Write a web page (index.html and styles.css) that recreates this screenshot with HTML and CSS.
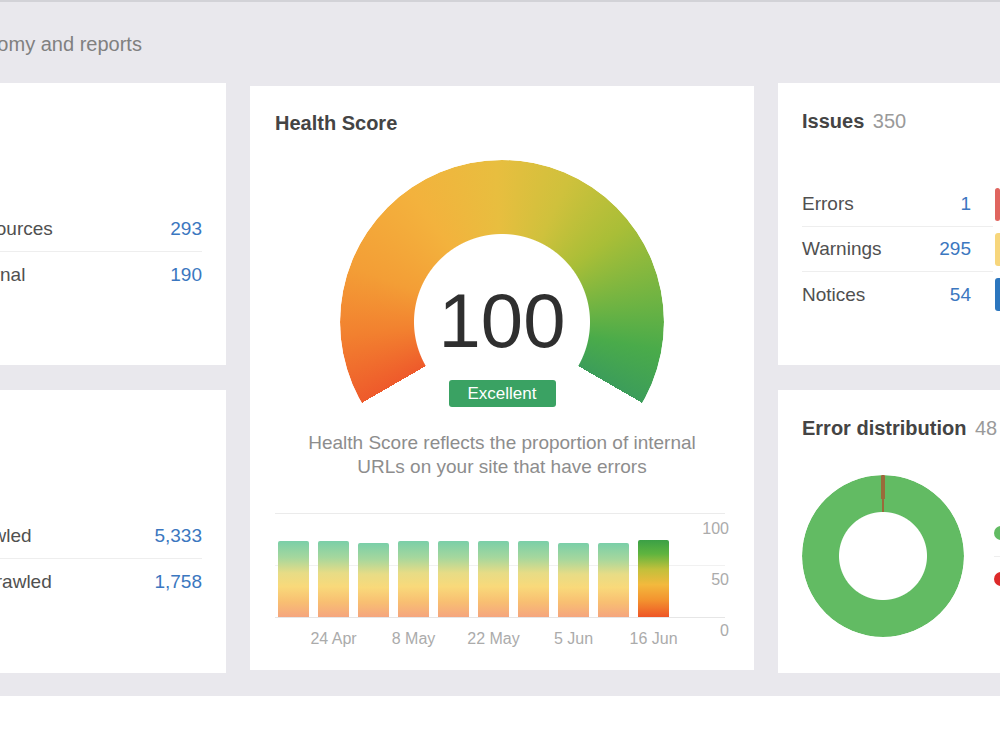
FILE: index.html
```html
<!DOCTYPE html>
<html>

<head>
    <link rel="stylesheet" href="styles.css">
</head>

<body>
    <div class="page">
        <div class="board">
            <div class="page-title">Taxonomy and reports</div>
            <div class="grid">
                <div class="card wide-left">
                    <div class="rows">
                        <div class="row"><span class="label">Resources</span><span class="num">293</span></div>
                        <div class="row"><span class="label">Internal</span><span class="num">190</span></div>
                    </div>
                </div>

                <div class="card health">
                    <div class="card-title">Health Score</div>
                    <div class="gauge">
                        <div class="gauge-value">100</div>
                        <div class="gauge-badge">Excellent</div>
                    </div>
                    <div class="health-text">Health Score reflects the proportion of internal<br>URLs on your site that have errors</div>
                    <div class="chart">
                        <div class="plot">
                            <div class="bars">
                                <div class="bar" style="height:76px"></div>
                                <div class="bar" style="height:76px"></div>
                                <div class="bar" style="height:74px"></div>
                                <div class="bar" style="height:76px"></div>
                                <div class="bar" style="height:76px"></div>
                                <div class="bar" style="height:76px"></div>
                                <div class="bar" style="height:76px"></div>
                                <div class="bar" style="height:74px"></div>
                                <div class="bar" style="height:74px"></div>
                                <div class="bar bar-now" style="height:77px"></div>
                            </div>
                            <div class="y-axis">
                                <span>100</span>
                                <span>50</span>
                                <span>0</span>
                            </div>
                        </div>
                        <div class="x-axis">
                            <span></span><span>24 Apr</span>
                            <span></span><span>8 May</span>
                            <span></span><span>22 May</span>
                            <span></span><span>5 Jun</span>
                            <span></span><span>16 Jun</span>
                        </div>
                    </div>
                </div>

                <div class="card side">
                    <div class="card-title">Issues <span class="title-count">350</span></div>
                    <div class="issues">
                        <div class="issue">
                            <div class="issue-info"><span class="label">Errors</span><span class="num">1</span></div>
                            <div class="issue-track"><div class="issue-bar errors"></div></div>
                        </div>
                        <div class="issue">
                            <div class="issue-info"><span class="label">Warnings</span><span class="num">295</span></div>
                            <div class="issue-track"><div class="issue-bar warnings"></div></div>
                        </div>
                        <div class="issue">
                            <div class="issue-info"><span class="label">Notices</span><span class="num">54</span></div>
                            <div class="issue-track"><div class="issue-bar notices"></div></div>
                        </div>
                    </div>
                </div>

                <div class="card wide-left">
                    <div class="rows">
                        <div class="row"><span class="label">Crawled</span><span class="num">5,333</span></div>
                        <div class="row"><span class="label">Uncrawled</span><span class="num">1,758</span></div>
                    </div>
                </div>

                <div class="card side">
                    <div class="card-title">Error distribution <span class="title-count">48</span></div>
                    <div class="dist">
                        <div class="donut"></div>
                        <div class="legend">
                            <div class="legend-row"><span class="dot ok"></span>No errors</div>
                            <div class="legend-row"><span class="dot bad"></span>With errors</div>
                        </div>
                    </div>
                </div>
            </div>
        </div>
    </div>
</body>

</html>
```

FILE: styles.css
```css
body {
    margin: 0;
    background: #fff;
    font-family: "Liberation Sans", Arial, sans-serif;
    overflow: hidden;
}

.page {
    background: #e9e8ed;
    border-top: 2px solid #d2d2d7;
    padding-bottom: 23px;
    overflow: hidden;
}

/* the board is wider than the window, its left edge is cut off */
.board {
    width: 1116px;
    margin-left: -56px;
}

.page-title {
    height: 81px;
    box-sizing: border-box;
    padding-top: 31px;
    font-size: 20px;
    line-height: 23px;
    color: #808080;
}

.grid {
    display: grid;
    grid-template-columns: 282px 504px 282px;
    grid-template-rows: 282px 283px;
    gap: 25px 24px;
}

.card {
    background: #fff;
    padding: 0 24px;
}

.wide-left {
    padding-left: 18px;
}

.card-title {
    font-size: 20px;
    font-weight: bold;
    line-height: 24px;
    color: #444;
}

.title-count {
    font-weight: normal;
    color: #9a9a9a;
    margin-left: 3px;
}

.rows {
    padding-top: 123px;
}

.row {
    display: flex;
    justify-content: space-between;
    align-items: center;
    height: 45px;
    font-size: 19px;
    color: #505050;
    white-space: nowrap;
}

.row:first-child {
    border-bottom: 1px solid #eeeeee;
}

.num {
    color: #3b77c0;
}

/* health score */
.health {
    grid-column: 2;
    grid-row: 1 / 3;
    margin: 3px 0;
    padding: 25px 25px 0;
}

.gauge {
    position: relative;
    width: 324px;
    height: 247px;
    margin: 25px auto 0;
    display: flex;
    flex-direction: column;
    align-items: center;
}

.gauge::before {
    content: "";
    position: absolute;
    top: 0;
    left: 0;
    width: 324px;
    height: 324px;
    border-radius: 50%;
    background: conic-gradient(from 240deg,
        #ee5a2b 0deg, #f2802f 25deg, #f39e36 50deg, #f3b23d 85deg,
        #e8be3f 118deg, #cfc13c 145deg, #a9be37 172deg, #6cb343 203deg,
        #4aab4a 220deg, #3c9d5a 240deg, transparent 240deg);
    -webkit-mask: radial-gradient(circle, transparent 87.5px, #000 88.5px);
    mask: radial-gradient(circle, transparent 87.5px, #000 88.5px);
}

.gauge-value {
    position: relative;
    margin-top: 123px;
    font-size: 76px;
    line-height: 76px;
    color: #2f2f2f;
}

.gauge-badge {
    position: relative;
    margin-top: 21px;
    width: 107px;
    height: 27px;
    border-radius: 3px;
    background: #3aa263;
    color: #fff;
    font-size: 17px;
    line-height: 27px;
    text-align: center;
}

.health-text {
    margin-top: 24px;
    font-size: 19px;
    line-height: 24px;
    color: #8d8d8d;
    text-align: center;
    white-space: nowrap;
}

.chart {
    margin-top: 34px;
    width: 454px;
}

.plot {
    display: flex;
    height: 103px;
    margin-right: 4px;
    border-top: 1px solid #ebebeb;
    border-bottom: 1px solid #e6e6e6;
    background: linear-gradient(#f1f1f1, #f1f1f1) 0 51px / 100% 1px no-repeat;
}

.bars {
    display: flex;
    align-items: flex-end;
    gap: 9px;
    padding-left: 3px;
}

.bar {
    width: 31px;
    border-radius: 2px 2px 0 0;
    background: linear-gradient(#7acfa8 0%, #a6d79d 22%, #e7dc86 42%, #f9d97a 60%, #f8bf72 80%, #f5a57e 100%);
}

.bar-now {
    background: linear-gradient(#3ba046 0%, #5fb43f 18%, #c2c03b 38%, #f3b93d 58%, #f3932f 78%, #ee5526 100%);
}

.y-axis {
    margin-left: auto;
    margin-right: -4px;
    display: flex;
    flex-direction: column;
    align-items: flex-end;
    gap: 34px;
    padding-top: 6px;
    font-size: 16px;
    line-height: 17px;
    color: #ababab;
}

.x-axis {
    display: flex;
    gap: 9px;
    padding-left: 3px;
    margin-top: 12px;
    font-size: 16px;
    line-height: 17px;
    color: #ababab;
}

.x-axis span {
    width: 31px;
    display: flex;
    justify-content: center;
    white-space: nowrap;
}

/* right column */
.side {
    padding-top: 26px;
}

.issues {
    margin-top: 49px;
}

.issue {
    display: flex;
    height: 45px;
}

.issue-info {
    flex: 1;
    display: flex;
    justify-content: space-between;
    align-items: center;
    padding-right: 22px;
    font-size: 19px;
    color: #505050;
}

.issue:not(:last-child) .issue-info {
    border-bottom: 1px solid #eeeeee;
}

.issue-track {
    width: 41px;
    margin-left: 2px;
    display: flex;
    align-items: center;
}

.issue-bar {
    height: 33px;
    border-radius: 3px;
}

.errors {
    width: 5px;
    background: #e0655f;
}

.warnings {
    width: 60px;
    background: #f7d67c;
}

.notices {
    width: 60px;
    background: #2c76be;
}

.dist {
    display: flex;
    align-items: center;
    gap: 30px;
    margin-top: 35px;
}

.donut {
    flex: none;
    width: 162px;
    height: 162px;
    border-radius: 50%;
    background: conic-gradient(from -1.5deg, #9a6a3a 0deg 3deg, #62bb63 3deg);
    -webkit-mask: radial-gradient(circle, transparent 43.5px, #000 44.5px);
    mask: radial-gradient(circle, transparent 43.5px, #000 44.5px);
}

.legend {
    width: 100px;
}

.legend-row {
    display: flex;
    align-items: center;
    gap: 12px;
    height: 45px;
    font-size: 19px;
    color: #505050;
    white-space: nowrap;
}

.legend-row:first-child {
    border-bottom: 1px solid #eeeeee;
}

.dot {
    flex: none;
    width: 14px;
    height: 14px;
    border-radius: 50%;
}

.ok {
    background: #62bb63;
}

.bad {
    background: #dd2a2a;
}
```
